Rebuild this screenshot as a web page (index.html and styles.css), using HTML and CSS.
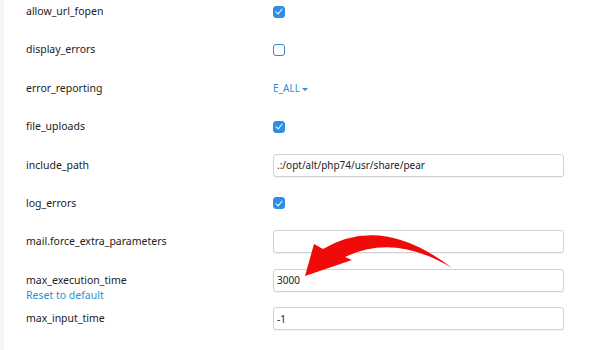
FILE: index.html
```html
<!DOCTYPE html>
<html lang="en">
<head>
  <meta charset="UTF-8" />
  <meta name="viewport" content="width=device-width, initial-scale=1.0"/>
  <title>PHP Options</title>
  <link rel="stylesheet" href="styles.css">
</head>
<body>
  <div class="page">
    <div class="options">
      <div class="row">
        <span class="label">allow_url_fopen</span>
        <span class="check on"></span>
      </div>
      <div class="row">
        <span class="label">display_errors</span>
        <span class="check"></span>
      </div>
      <div class="row">
        <span class="label">error_reporting</span>
        <span class="select">E_ALL<span class="caret"></span></span>
      </div>
      <div class="row">
        <span class="label">file_uploads</span>
        <span class="check on"></span>
      </div>
      <div class="row">
        <span class="label">include_path</span>
        <input class="field" type="text" value=".:/opt/alt/php74/usr/share/pear">
      </div>
      <div class="row">
        <span class="label">log_errors</span>
        <span class="check on"></span>
      </div>
      <div class="row">
        <span class="label">mail.force_extra_parameters</span>
        <input class="field" type="text" value="">
      </div>
      <div class="row">
        <div class="label-group">
          <span class="label short">max_execution_time</span>
          <a class="reset" href="#">Reset to default</a>
        </div>
        <input class="field" type="text" value="3000">
      </div>
      <div class="row">
        <span class="label">max_input_time</span>
        <input class="field" type="text" value="-1">
      </div>
    </div>

    <svg class="arrow" width="600" height="350" viewBox="0 0 600 350">
      <path d="M305 276 L314 244 L323 249 Q382 214 452 268 Q394 233 345 257 L352 260 Z" fill="#f00a0a"/>
    </svg>
  </div>
</body>
</html>
```

FILE: styles.css
```css
body {
  margin: 0;
  font-family: "Noto Sans", "Open Sans", sans-serif;
  background-color: #fff;
  color: #222;
}

.page {
  position: relative;
  width: 600px;
  height: 350px;
  overflow: hidden;
  border-left: 4px solid #f6f6f6;
  box-sizing: border-box;
}

.options {
  display: grid;
  grid-auto-rows: 38.4px;
  padding-left: 22px;
}

.row {
  display: flex;
  align-items: flex-start;
}

.label-group {
  display: flex;
  flex-direction: column;
  width: 247px;
}

.label {
  width: 247px;
  font-size: 10.5px;
  line-height: 23px;
}

.label.short {
  padding-top: 3px;
  line-height: 17px;
}

.reset {
  font-size: 10.5px;
  line-height: 12px;
  color: #2b8fd6;
  text-decoration: none;
}

.check {
  width: 12px;
  height: 12px;
  margin-top: 5.5px;
  border: 1.5px solid #3a86d0;
  border-radius: 3px;
  box-sizing: border-box;
  position: relative;
}

.check.on {
  background-color: #2e8de6;
  border-color: #2e8de6;
}

.check.on::after {
  content: "";
  position: absolute;
  left: 3px;
  top: 0.5px;
  width: 3px;
  height: 6px;
  border: solid #fff;
  border-width: 0 1.5px 1.5px 0;
  transform: rotate(40deg);
}

.select {
  font-size: 10px;
  line-height: 23px;
  color: #2b8fd6;
}

.caret {
  display: inline-block;
  margin-left: 2px;
  vertical-align: middle;
  border-left: 3px solid transparent;
  border-right: 3px solid transparent;
  border-top: 3px solid #2b8fd6;
}

.field {
  width: 291px;
  height: 23px;
  margin: 0;
  padding: 0 3px;
  box-sizing: border-box;
  border: 1px solid #d2d2d2;
  border-radius: 3px;
  box-shadow: 0 1px 1px rgba(0, 0, 0, 0.06);
  font-family: "Noto Sans", "Open Sans", sans-serif;
  font-size: 10px;
  color: #222;
  outline: none;
}

.arrow {
  position: absolute;
  left: -4px;
  top: 0;
  pointer-events: none;
}
```
